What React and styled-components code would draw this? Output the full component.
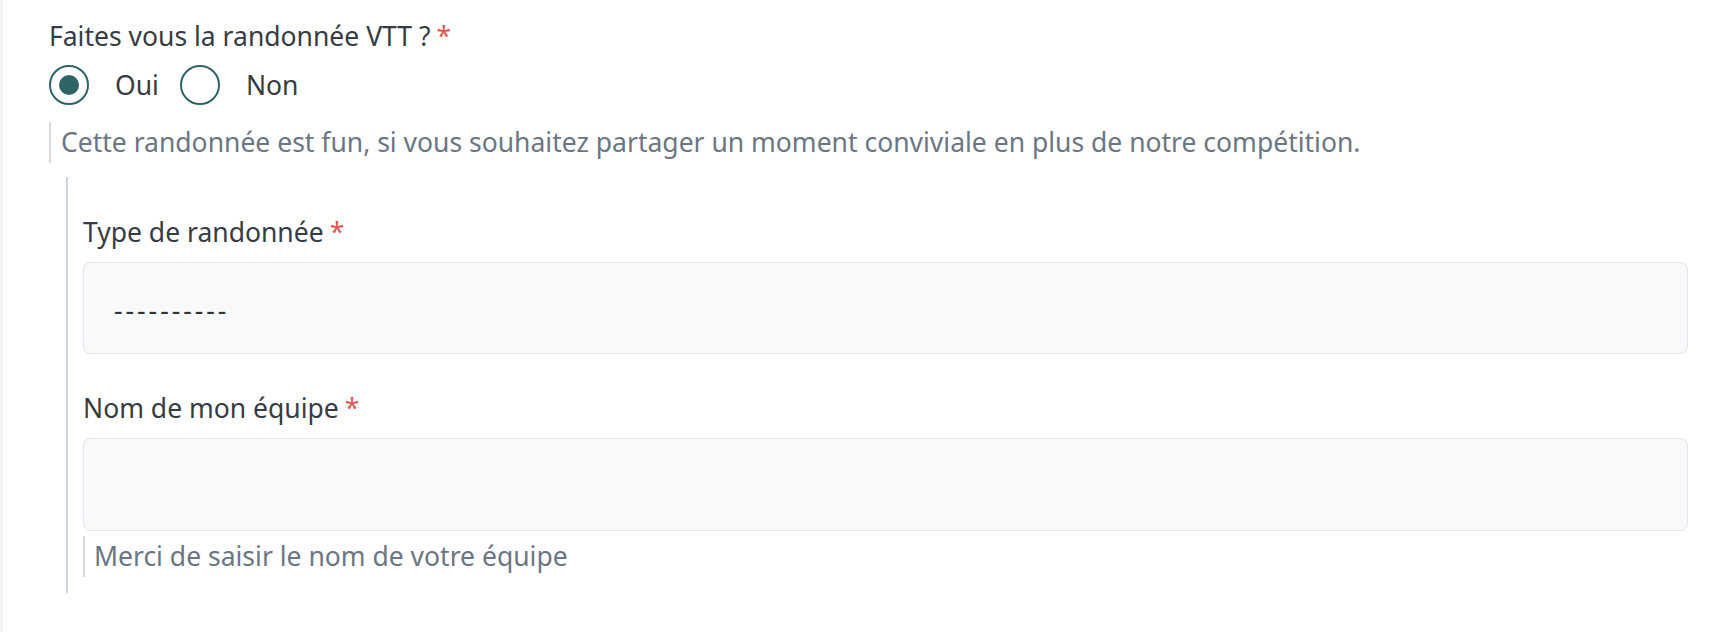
import React from 'react'
import styled, { createGlobalStyle } from 'styled-components'

const GlobalStyle = createGlobalStyle`
  body {
    margin: 0;
    background: #fff;
    font-family: "Noto Sans", "Open Sans", sans-serif;
  }
`

const Card = styled.div`
  min-height: 632px;
  box-sizing: border-box;
  border-left: 3px solid #f1f3f7;
  padding: 18px 40px 0 46px;
`

const Label = styled.div`
  font-size: 26.5px;
  line-height: 36px;
  color: #373c43;
`

const Star = styled.span`
  color: #e0574c;
  margin-left: 6px;
`

const RadioRow = styled.div`
  display: flex;
  align-items: center;
  margin-top: 11px;
  height: 40px;
`

const RadioCircle = styled.span`
  box-sizing: border-box;
  width: 40px;
  height: 40px;
  border-radius: 50%;
  border: 2px solid #2e6468;
  display: flex;
  align-items: center;
  justify-content: center;
  flex-shrink: 0;
  &::after {
    content: '';
    width: 20px;
    height: 20px;
    border-radius: 50%;
    background: ${p => (p.checked ? '#2e6468' : 'transparent')};
  }
`

const RadioText = styled.span`
  font-size: 26.5px;
  color: #373c43;
  margin: 0 21px 0 26px;
`

const Help = styled.div`
  margin-top: 17px;
  border-left: 2px solid #d6d9de;
  padding-left: 10px;
  font-size: 26.5px;
  line-height: 41px;
  color: #6b7684;
`

const Nested = styled.div`
  margin: 14px 0 0 17px;
  border-left: 2px solid #cfd7e6;
  padding: 37px 0 16px 15px;
`

const FieldLabel = styled(Label)`
  margin-top: ${p => p.gap || 0}px;
  margin-bottom: 12px;
`

const Box = styled.div`
  box-sizing: border-box;
  height: ${p => p.h}px;
  background: #f8f9fb;
  border: 1.5px solid #e4e7ed;
  border-radius: 7px;
  display: flex;
  align-items: center;
  padding-left: 30px;
  font-size: 26.5px;
  color: #333;
`

const Placeholder = styled.span`
  letter-spacing: 3px;
  padding-top: 4px;
`

const SmallHelp = styled(Help)`
  margin-top: 5px;
  padding-left: 9px;
`

export default function App() {
  return (
    <>
      <GlobalStyle />
      <Card>
        <Label>
          Faites vous la randonnée VTT ?<Star>*</Star>
        </Label>
        <RadioRow>
          <RadioCircle checked />
          <RadioText>Oui</RadioText>
          <RadioCircle />
          <RadioText>Non</RadioText>
        </RadioRow>
        <Help>
          Cette randonnée est fun, si vous souhaitez partager un moment conviviale en plus de notre compétition.
        </Help>
        <Nested>
          <FieldLabel>
            Type de randonnée<Star>*</Star>
          </FieldLabel>
          <Box h={92}>
            <Placeholder>----------</Placeholder>
          </Box>
          <FieldLabel gap={36}>
            Nom de mon équipe<Star>*</Star>
          </FieldLabel>
          <Box h={93} />
          <SmallHelp>Merci de saisir le nom de votre équipe</SmallHelp>
        </Nested>
      </Card>
    </>
  )
}
